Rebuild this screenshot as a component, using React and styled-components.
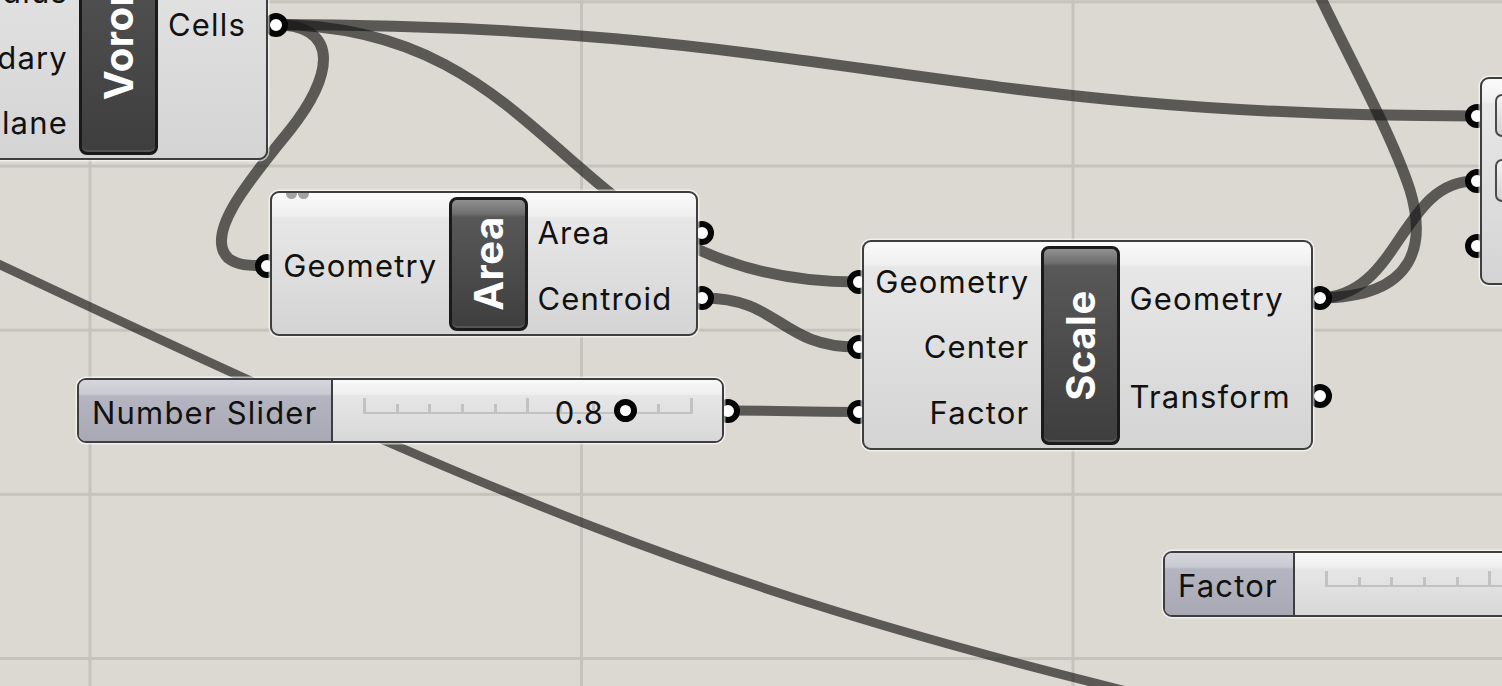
import React from "react";
import styled, { createGlobalStyle } from "styled-components";

// port ring sits a little outside the body edge
const PORT = 24;
const PORT_OUT = 3;
const PAD_L = 13;
const PAD_R = 24;
const BORDER = 2.5;

const GlobalStyle = createGlobalStyle`
  html, body {
    margin: 0;
    padding: 0;
    background: #dcd9d2;
  }
  body {
    font-family: Inter, "Liberation Sans", sans-serif;
    color: #111;
  }
`;

const Canvas = styled.div`
  position: relative;
  width: 1502px;
  height: 686px;
  overflow: hidden;
  background-color: #dcd9d2;
  background-image: linear-gradient(to right, #c6c3bd 3px, transparent 3px),
    linear-gradient(to bottom, #c6c3bd 3px, transparent 3px);
  background-size: 491.5px 164.2px;
  background-position: 88.5px 164.5px;
`;

const WireLayer = styled.svg`
  position: absolute;
  left: 0;
  top: 0;
  width: 1502px;
  height: 686px;
`;

const Wire = styled.path`
  fill: none;
  stroke: rgba(26, 26, 24, 0.67);
  stroke-width: ${(p) => p.$w || 11}px;
  stroke-linecap: round;
`;

const NodeWrap = styled.div`
  position: absolute;
  left: ${(p) => p.$x}px;
  top: ${(p) => p.$y}px;
  width: ${(p) => p.$w}px;
  z-index: 1;
`;

const Body = styled.div`
  position: relative;
  display: flex;
  box-sizing: border-box;
  height: ${(p) => p.$h}px;
  padding: 0 ${PAD_R}px 0 ${PAD_L}px;
  border: ${BORDER}px solid #3e3e3e;
  border-radius: 9px;
  background: linear-gradient(
    #fbfbfb 0,
    #efefef 23px,
    #e7e7e7 25px,
    #d4d4d4 100%
  );
  box-shadow: 0 0 0 1.5px rgba(255, 255, 255, 0.6);
`;

const ParamCol = styled.div`
  display: flex;
  flex-direction: column;
  padding: ${(p) => p.$pad || "7px 0 3px"};
  width: ${(p) => (p.$w ? `${p.$w}px` : "auto")};
  flex: ${(p) => (p.$w ? "none" : 1)};
`;

const ParamRow = styled.div`
  position: relative;
  flex: 1;
  display: flex;
  align-items: center;
  justify-content: ${(p) => (p.$side === "in" ? "flex-end" : "flex-start")};
  font-size: 31px;
  letter-spacing: 1.2px;
  white-space: nowrap;
`;

const Port = styled.span`
  position: absolute;
  z-index: -1;
  top: 50%;
  width: ${PORT}px;
  height: ${PORT}px;
  margin-top: -${PORT / 2}px;
  box-sizing: border-box;
  border: 6px solid #050505;
  border-radius: 50%;
  background: #fff;
  ${(p) =>
    p.$side === "in"
      ? `left: -${PAD_L + BORDER + PORT_OUT + PORT / 2}px;`
      : `right: -${PAD_R + BORDER + PORT_OUT + PORT / 2}px;`}
`;

const TitleBlock = styled.div`
  flex: none;
  width: 79px;
  box-sizing: border-box;
  margin: 3.5px 10px 3.5px 11px;
  border: 3px solid #1a1a1a;
  border-radius: 8px;
  background: linear-gradient(
    #909090 0,
    #6e6e6e 14px,
    #585858 17px,
    #3e3e3e 100%
  );
  box-shadow: inset 0 -2px 0 rgba(255, 255, 255, 0.12);
  display: flex;
  align-items: center;
  justify-content: center;
`;

const TitleText = styled.span`
  transform: rotate(-90deg);
  color: #fff;
  font-weight: 700;
  font-size: 40px;
  letter-spacing: 0.5px;
  white-space: nowrap;
`;

const Dots = styled.div`
  position: absolute;
  top: 0;
  left: 14px;
  display: flex;
  gap: 1px;
`;

const Dot = styled.span`
  width: 11px;
  height: 6px;
  border-radius: 0 0 6px 6px;
  background: #a3a3a3;
`;

const SliderWrap = styled.div`
  position: absolute;
  left: ${(p) => p.$x}px;
  top: ${(p) => p.$y}px;
  width: ${(p) => p.$w}px;
  z-index: 1;
`;

const SliderBody = styled.div`
  position: relative;
  display: flex;
  box-sizing: border-box;
  height: ${(p) => p.$h}px;
  border: ${BORDER}px solid #3e3e3e;
  border-radius: 9px;
  box-shadow: 0 0 0 1.5px rgba(255, 255, 255, 0.6);
`;

const SliderLabel = styled.div`
  flex: none;
  width: ${(p) => p.$w}px;
  box-sizing: border-box;
  display: flex;
  align-items: center;
  padding: 3px 0 0 13px;
  border-right: 2.5px solid #3e3e3e;
  border-radius: 6.5px 0 0 6.5px;
  background: linear-gradient(
    #d6d6de 0,
    #c9c9d2 14px,
    #b5b5c1 16px,
    #a9a9b6 100%
  );
  font-size: 31px;
  letter-spacing: 1.2px;
  white-space: nowrap;
`;

const SliderTrack = styled.div`
  position: relative;
  flex: 1;
  padding: 18px 0 0 30px;
  border-radius: 0 6.5px 6.5px 0;
  background: linear-gradient(
    #f8f8f8 0,
    #efefef 14px,
    #e6e6e6 16px,
    #d8d8d8 100%
  );
`;

const Rail = styled.div`
  display: flex;
  justify-content: space-between;
  align-items: flex-end;
  width: ${(p) => p.$w}px;
  height: 14px;
  border-bottom: 2px solid #c2c2c2;
`;

const Tick = styled.span`
  width: 3px;
  height: ${(p) => (p.$major ? 14 : 8)}px;
  background: #c2c2c2;
`;

const ValueGroup = styled.div`
  position: absolute;
  top: 50%;
  right: ${(p) => p.$right}px;
  transform: translateY(-50%);
  display: flex;
  align-items: center;
  gap: 10px;
  font-size: 31px;
  letter-spacing: 1px;
  padding-top: 3px;
`;

const Knob = styled.span`
  width: 23px;
  height: 23px;
  margin-top: -3px;
  box-sizing: border-box;
  border: 6px solid #000;
  border-radius: 50%;
  background: #fff;
`;

const SliderPort = styled(Port)`
  right: -${PORT_OUT + PORT / 2 + BORDER}px;
`;

const ParamIcon = styled.div`
  width: 60px;
  height: 43px;
  box-sizing: border-box;
  border: 2.5px solid #4a4a4a;
  border-radius: 7px;
  background: linear-gradient(#f2f2f2, #d2d2d2);
  display: flex;
  align-items: center;
  padding-left: 4px;
`;

const Node = ({ x, y, w, h, inW, title, inputs, outputs, dots }) => (
  <NodeWrap $x={x} $y={y} $w={w}>
    <Body $h={h}>
      {dots && (
        <Dots>
          <Dot />
          <Dot />
        </Dots>
      )}
      <ParamCol $w={inW}>
        {inputs.map((name) => (
          <ParamRow key={name} $side="in">
            <Port $side="in" />
            {name}
          </ParamRow>
        ))}
      </ParamCol>
      <TitleBlock>
        <TitleText>{title}</TitleText>
      </TitleBlock>
      <ParamCol>
        {outputs.map((name) => (
          <ParamRow key={name} $side="out">
            {name}
            <Port $side="out" />
          </ParamRow>
        ))}
      </ParamCol>
    </Body>
  </NodeWrap>
);

const ticks = Array.from({ length: 11 }, (_, i) => i);

const Slider = ({ x, y, w, h, labelW, label, value, valueRight }) => (
  <SliderWrap $x={x} $y={y} $w={w}>
    <SliderBody $h={h}>
      <SliderLabel $w={labelW}>{label}</SliderLabel>
      <SliderTrack>
        <Rail $w={330}>
          {ticks.map((i) => (
            <Tick key={i} $major={i % 5 === 0} />
          ))}
        </Rail>
        {value && (
          <ValueGroup $right={valueRight}>
            {value}
            <Knob />
          </ValueGroup>
        )}
      </SliderTrack>
      {value && <SliderPort $side="out" />}
    </SliderBody>
  </SliderWrap>
);

const ArrowMark = () => (
  <svg width="14" height="16" viewBox="0 0 14 16">
    <path d="M1 8 L9 2 L9 6 L13 6 L13 10 L9 10 L9 14 Z" fill="#8a8a8a" />
  </svg>
);

const ParamBank = () => (
  <NodeWrap $x={1480} $y={77} $w={160}>
    <Body $h={208}>
      <ParamCol $pad="4px 0 4px">
        {[0, 1, 2].map((i) => (
          <ParamRow key={i} $side="out">
            <Port $side="in" />
            {i < 2 && (
              <ParamIcon>
                <ArrowMark />
              </ParamIcon>
            )}
          </ParamRow>
        ))}
      </ParamCol>
    </Body>
  </NodeWrap>
);

const App = () => (
  <>
    <GlobalStyle />
    <Canvas>
      <WireLayer viewBox="0 0 1502 686">
        <Wire $w={9} d="M-10 260 C 500 500 707 586 1107 686 L 1160 700" />
        <Wire d="M273 24.5 C 820 24.5 930 116 1475 116" />
        <Wire d="M273 24.5 C 563 24.5 563 282 857 282" />
        <Wire d="M273 24.5 C 345 24.5 330 80 290 130 C 245 185 205 235 228 258 C 238 266 250 265.5 265 265.5" />
        <Wire d="M703 298 C 780 298 780 347 857 347" />
        <Wire $w={10} d="M729 410.5 C 793 410.5 793 412 857 412" />
        <Wire d="M1318 298 C 1400 298 1400 181 1475 181" />
        <Wire d="M1318 298 C 1420 298 1425 240 1410 190 C 1390 130 1345 50 1318 -8" />
      </WireLayer>

      <Node
        x={-97}
        y={-115}
        w={365}
        h={275}
        inW={150}
        title="Voronoi"
        inputs={["Points", "Radius", "Boundary", "Plane"]}
        outputs={["Cells"]}
      />
      <Node
        x={270}
        y={191}
        w={428}
        h={145}
        inW={152.5}
        title="Area"
        inputs={["Geometry"]}
        outputs={["Area", "Centroid"]}
        dots
      />
      <Node
        x={862}
        y={240}
        w={451}
        h={210}
        inW={152.5}
        title="Scale"
        inputs={["Geometry", "Center", "Factor"]}
        outputs={["Geometry", "Transform"]}
      />
      <Slider
        x={77}
        y={378}
        w={647}
        h={65}
        labelW={254}
        label="Number Slider"
        value="0.8"
        valueRight={85}
      />
      <Slider x={1163} y={551} w={460} h={66} labelW={130} label="Factor" />
      <ParamBank />
    </Canvas>
  </>
);

export default App;
